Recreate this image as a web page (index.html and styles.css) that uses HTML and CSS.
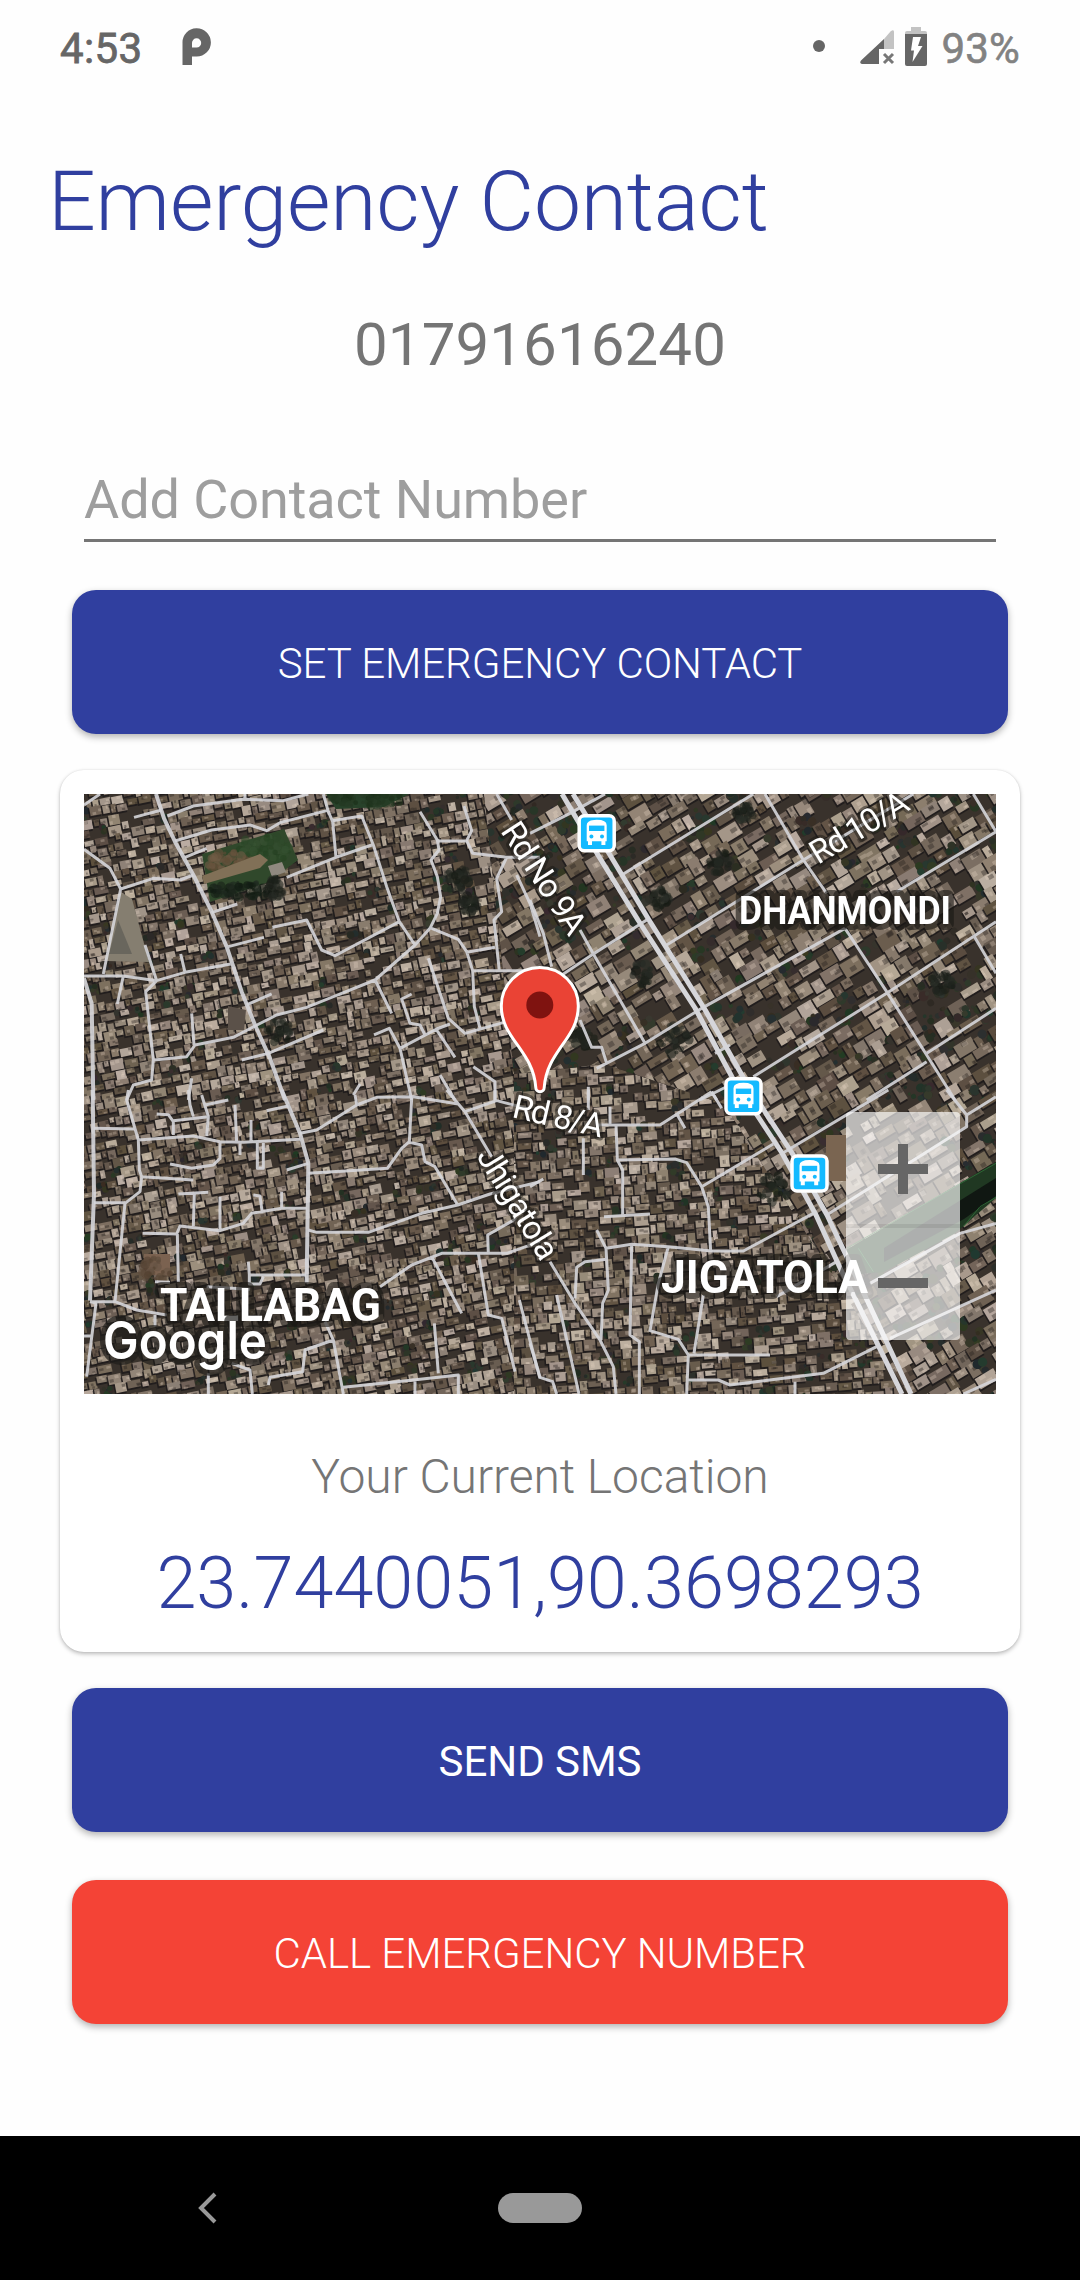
FILE: index.html
```html
<!DOCTYPE html>
<html lang="en">
<head>
<meta charset="utf-8">
<title>Emergency Contact</title>
<link rel="stylesheet" href="styles.css">
</head>
<body>
<div class="screen">
  <header class="status">
    <span class="clock">4:53</span>
    <svg class="p-icon" width="30" height="38" viewBox="0 0 30 38"><path fill="#666" fill-rule="evenodd" d="M.5 37V15A14.2 14.2 0 1 1 14.7 28.600H10V37ZM10 19.500V15A4.600 4.600 0 1 1 14.500 19.500Z"/></svg>
    <span class="dot"></span>
    <svg class="signal" width="36" height="36" viewBox="0 0 36 36"><path fill="#c3c3c3" d="M25 10 31.500 2.500Q35 0 35 3V20H25Z"/><path fill="#666" d="M25 10V20H20V35H3Q0 34 2 31.500Z"/><path stroke="#777" stroke-width="3" d="m25 25 9 9m0-9-9 9"/></svg>
    <svg class="battery" width="22" height="40" viewBox="0 0 22 40"><path fill="#c3c3c3" d="M6 0H16V4H20Q22 4 22 6V8H0V6Q0 4 2 4H6Z"/><path fill="#666" d="M0 7H22V37Q22 39 20 39H2Q0 39 0 37Z"/><path fill="#fff" d="M8 10H16L13 19H17.500L7.500 35 9 23.500H6Z"/></svg>
    <span class="percent">93%</span>
  </header>
  <main class="content">
    <h1 class="title">Emergency Contact</h1>
    <p class="number">01791616240</p>
    <div class="field">Add Contact Number</div>
    <button class="btn">SET EMERGENCY CONTACT</button>
    <section class="card">
      <div class="map">
        <canvas class="satellite" width="912" height="600"></canvas>
        <svg class="overlay" width="912" height="600" viewBox="0 0 912 600">
          <g class="roads">
            <g transform="translate(-24 -24) scale(.33333)">
              <path class="main" d="M288 72 312 145 345 215 400 315 455 425 500 530 545 665 585 765 630 865 675 990M72 625 95 700 100 990"/>
              <path d="M72 105 120 72M222 142 305 120M322 138 400 108 550 88 670 92 745 72M555 72V90M345 213 455 180 570 165 620 182 660 158 800 122M790 72 805 125 818 155 828 262M818 152 905 138 940 225 980 350 1018 455 1065 525M680 322 828 262 935 225M375 262 440 235M72 238 150 295 182 357 130 612M182 357 280 325 360 330 400 315M72 618 190 618 290 632 375 607 512 582M290 632 255 525M375 607 362 552M190 618 172 702M455 428 532 402M505 530 612 502M637 472 740 450 785 540 825 557 1018 455M560 705 635 672M290 632 257 665 280 870 275 930 220 945 200 990M282 870 380 860 405 825 520 802 585 768 650 735 740 712 945 630 1065 525 1110 475 1132 430 1142 380 1132 320 1113 270 1137 240 1132 210 1080 125M402 825 395 730M395 925 385 990M545 870 625 850 790 780M945 630 995 730M1132 213 1220 212 1235 182 1212 108M1220 212 1238 250 1340 262 1440 262M1340 262 1310 325 1325 425 1302 450 1318 603M1115 475 1195 508 1220 545 1238 602 1243 710 1260 775M1220 547 1305 532M1238 602H1420M1105 565 1165 745 1215 790 1340 755M1055 672 1025 687 1050 760 1080 765 1095 795M1020 835 1130 777 1170 762M1130 780 1185 862M942 795 988 775 1020 835 1055 990M1310 72 1355 150M1370 315 1410 400 1440 500M1240 890 1305 935V990M1140 915 1185 990M880 975 900 942"/>
            </g>
            <g transform="translate(446 -24) scale(.33333)">
              <path d="M0 190 120 130 225 72M275 315 670 72M705 72 820 270 890 370M410 525 820 270 1150 72M945 475 1070 665 1190 855 1275 990M1330 72 1398 185M1100 365 1398 185M1330 495 1398 610M1010 990 1190 875M1190 850 1398 715M0 390 40 490 65 590M100 612 190 552 350 450M150 480 190 552 345 820 200 895M345 820 520 712 945 475M670 920 1070 670 1398 455M150 750 185 832H215L230 880M510 990 600 945M545 965 560 990M175 950V990M555 850 600 825"/>
            </g>
            <g transform="translate(-24 296) scale(.33333)">
              <path class="main" d="M665 0 720 130 745 220 740 580M98 0 102 310 90 632"/>
              <path d="M205 0 200 30 235 150 400 138 480 155 550 157 720 148M385 0 390 45 400 80M290 72 325 74 340 95V135M340 92 445 80 425 15M445 80 440 138M435 45 505 30M525 45 530 157M573 90V155M620 62 685 48M720 130 770 120 890 45 950 22 1060 20 1195 42 1160 0M1055 25 1048 155 1025 175 982 235 745 250M1048 157 1085 165 1095 215 1125 230 1193 345 1290 312 1440 275M1193 345 1085 370 925 427H770L745 420M235 150 238 240 245 260 240 305 195 340 165 635M245 260 400 270M330 222 395 235 460 225 480 205V155M102 115 225 117M102 338H195M540 157V195M592 157V235H610V157M680 240 745 220M355 312 445 307M403 312 400 408M248 430 350 432 360 408 480 422 550 400 575 370 665 355 740 355M580 315 600 318 607 370M665 305V355M480 320V422M352 432 355 575M565 515 568 555H738M568 555V582H600L610 560M285 575 330 577M440 590 570 598M90 635 165 635 230 660 320 675M90 635 108 640 80 860M72 738H92M285 675V710M795 695 820 750 850 912M820 750 735 780 728 845 630 862 625 885M850 892 1060 870 1195 855V912M445 850V912M515 820 570 840 577 912M1065 870V912M1123 700 1135 850M960 590 1055 525 1145 490H1340L1440 455M1115 500 1205 670M1255 490 1285 675 1325 685 1365 845M1285 490 1283 435 1370 385M1378 630 1440 865M1195 42 1215 65 1310 32 1400 55M1215 65 1295 200M1305 0V30M885 15 890 42"/>
            </g>
            <g transform="translate(446 296) scale(.33333)">
              <path d="M175 0V60M200 105H390L545 5M240 50V105M160 145V255M0 290 40 267M258 105 262 210 278 240V378M262 210 435 207 470 218 515 290 535 350 542 485M515 290 730 162M222 380 360 372M200 420 228 475 305 463 415 470 545 483H640L850 370M228 475 235 600 218 640 213 750M230 508 165 515 140 532 135 625M60 515 135 640 210 750 250 830 258 912M305 463 300 735 328 755V912M415 470 385 580 360 722 445 748 475 795 470 912M520 615 492 790M475 795H720M470 870 565 870 600 885 880 850 1040 770M795 875V912M80 615 147 912M0 760 30 862 68 875 80 912M442 75 465 115M545 5 575 55M760 188 1075 0M890 375 1310 110V75L1250 0M1310 75 1398 20M740 620 920 515M1020 580 1290 430 1398 400M1080 745 1398 600M1300 912 1398 868"/>
              <path class="shore" d="M950 475 1398 220M985 475 1030 545M1300 410 1350 350 1398 322"/>
            </g>
            <path class="avenue" d="M478 0 514 61 554 126 611 214 648 283 673 321 698 359 732 421 757 476 768 498 818 600M489 0 526 61 565 126 620 214 659 283 683 321 708 359 743 421 769 476 827 600"/>
          </g>
          <defs>
            <g id="bus">
              <rect x="-17.500" y="-17.500" width="35" height="35" rx="5" fill="#14baff" stroke="#fff" stroke-width="3.500"/>
              <path fill="#fff" d="M-10-8Q-10-13.500 0-13.500T10-8V8H8.700V11.700H4.700V8H-4.700V11.700H-8.700V8H-10Z"/>
              <path fill="#14baff" d="M-7.700-7.700H7.700V-2.300H-7.700Z"/>
              <circle cx="-5.300" cy="3.300" r="2" fill="#14baff"/><circle cx="5.300" cy="3.300" r="2" fill="#14baff"/>
            </g>
          </defs>
          <use href="#bus" x="512.700" y="39.300"/>
          <use href="#bus" x="659.500" y="302.300"/>
          <use href="#bus" x="725.500" y="379.500"/>
          <g class="street">
            <text transform="translate(416 37) rotate(57)" textLength="127">Rd No 9A</text>
            <text transform="translate(734 71) rotate(-31)" textLength="109">Rd 10/A</text>
            <text transform="translate(427 323) rotate(13)" textLength="92">Rd 8/A</text>
            <text transform="translate(392 362) rotate(58.600)" textLength="125">Jhigatola</text>
          </g>
          <g class="area">
            <text x="655" y="130" font-size="38.500" textLength="212" lengthAdjust="spacingAndGlyphs">DHANMONDI</text>
            <text x="76" y="526.700" font-size="46.500" textLength="221" lengthAdjust="spacingAndGlyphs">TALLABAG</text>
            <text x="577" y="498.700" font-size="46.500" textLength="207" lengthAdjust="spacingAndGlyphs">JIGATOLA</text>
          </g>
          <text class="google" x="19" y="565" textLength="164" lengthAdjust="spacingAndGlyphs">Google</text>
          <path fill="#ea4335" stroke="#fff" stroke-width="3" d="M494.300 212C494.300 245 463 256 460.200 293.500A4.200 4.200 0 0 1 451.800 293.500C449 256 417.300 245 417.300 212A38.500 38.500 0 0 1 494.300 212Z"/>
          <circle cx="455.800" cy="211" r="13.500" fill="#7f1310"/>
        </svg>
        <div class="zoom"><span class="plus"></span><span class="minus"></span></div>
      </div>
      <p class="caption">Your Current Location</p>
      <p class="coords">23.7440051,90.3698293</p>
    </section>
    <button class="btn regular">SEND SMS</button>
    <button class="btn call">CALL EMERGENCY NUMBER</button>
  </main>
  <nav class="navbar">
    <svg class="back" width="20" height="32" viewBox="0 0 20 32"><path fill="none" stroke="#999" stroke-width="4" d="M17 2 3 16 17 30"/></svg>
    <span class="home"></span>
  </nav>
</div>
<script src="map.js"></script>
</body>
</html>
```
FILE: styles.css
```css
* { box-sizing: border-box; }
body { margin: 0; background: #fff; font-family: Roboto, "Liberation Sans", sans-serif; }
h1, p { margin: 0; font-weight: 300; }
.screen { width: 1080px; height: 2280px; display: flex; flex-direction: column; overflow: hidden; background: #fefefe; }
.status { height: 96px; flex: none; display: flex; align-items: flex-start; padding: 24px 60px 0; color: #666; font-size: 42px; line-height: 49px; }
.clock { width: 122px; letter-spacing: .4px; -webkit-text-stroke: .8px #666; }
.p-icon { margin-top: 4px; }
.dot { width: 12px; height: 12px; border-radius: 50%; background: #666; margin: 16px 34px 0 auto; }
.signal { margin: 5px 10px 0 0; }
.battery { margin: 3px 14px 0 0; }
.percent { color: #828282; letter-spacing: .2px; -webkit-text-stroke: .6px #828282; }
.content { flex: 1; display: flex; flex-direction: column; align-items: center; }
.title { align-self: stretch; margin-top: 56px; padding-left: 48px; font-size: 84px; line-height: 100px; letter-spacing: -.17px; color: #303f9f; }
.number { margin-top: 58px; font-size: 60px; line-height: 70px; letter-spacing: .1px; font-weight: 400; color: #757575; }
.field { width: 912px; height: 74px; margin: 88px 0 48px; border-bottom: 3px solid #757575; font-size: 54px; line-height: 64px; letter-spacing: -.08px; color: #9e9e9e; }
.btn { display: block; flex: none; width: 936px; height: 144px; padding: 3px 0 0; border: 0; border-radius: 24px; background: #303f9f; color: #fff; font: 300 42px/49px Roboto, "Liberation Sans", sans-serif; letter-spacing: -.06px; box-shadow: 0 3px 7px rgba(0,0,0,.3); }
.btn.regular { font-weight: 400; }
.btn.call { margin-top: 48px; background: #f44336; }
.card { width: 960px; height: 882px; flex: none; margin: 36px 0; padding: 24px; border-radius: 24px; background: #fff; box-shadow: 0 2px 4px rgba(0,0,0,.26), 0 0 2px rgba(0,0,0,.1); display: flex; flex-direction: column; align-items: center; }
.map { position: relative; width: 912px; height: 600px; flex: none; overflow: hidden; background: #625b51; }
.satellite { display: block; filter: blur(.5px); }
.overlay { position: absolute; left: 0; top: 0; }
.roads path { fill: none; stroke: #d6d6da; stroke-opacity: .9; stroke-width: 9px; stroke-linejoin: round; }
.roads path.main { stroke-width: 12px; }
.roads path.avenue { stroke-width: 5px; stroke-opacity: 1; }
.roads path.shore { stroke: #2f6b38; stroke-width: 3px; }
.street text { font-size: 33px; fill: #fff; stroke: rgba(25,23,20,.5); stroke-width: 6px; stroke-linejoin: round; paint-order: stroke; }
.area text { font-weight: 700; fill: #fff; stroke: rgba(25,23,20,.6); stroke-width: 12px; stroke-linejoin: round; paint-order: stroke; }
.google { font-family: Inter, "Liberation Sans", sans-serif; font-weight: 600; font-size: 52px; fill: #fff; stroke: rgba(30,28,25,.7); stroke-width: 12px; stroke-linejoin: round; paint-order: stroke; }
.zoom { position: absolute; left: 762px; top: 318px; width: 114px; height: 228px; border-radius: 4px; background: linear-gradient(transparent 112px, rgba(0,0,0,.08) 112px 116px, transparent 116px), rgba(255,255,255,.66); display: grid; grid-template-rows: 1fr 1fr; place-items: center; }
.plus { width: 50px; height: 50px; background: linear-gradient(#666,#666) center / 10px 50px no-repeat, linear-gradient(#666,#666) center / 50px 10px no-repeat; }
.minus { width: 50px; height: 10px; background: #666; }
.caption { margin-top: 54px; font-size: 48px; line-height: 58px; letter-spacing: -.05px; color: #757575; }
.coords { margin-top: 35px; font-size: 72px; line-height: 86px; color: #303f9f; }
.navbar { height: 144px; flex: none; background: #000; display: flex; align-items: center; }
.back { margin-left: 198px; }
.home { width: 84px; height: 30px; margin-left: 280px; border-radius: 15px; background: #999; }
```
FILE: map.js
```js
const ctx = document.querySelector('.satellite').getContext('2d');

let seed = 20417;
function rnd() {
  seed = (seed * 1664525 + 1013904223) >>> 0;
  return seed / 4294967296;
}

// Fills the current clip with rows of rooftops, each with a cast shadow.
function rooftops(angle, cell, green, light) {
  ctx.save();
  ctx.translate(456, 300);
  ctx.rotate(angle);
  for (let y = -620; y < 620; y += cell * 0.92) {
    for (let x = -620 - rnd() * cell; x < 620;) {
      const w = cell * (0.45 + rnd() * 0.95);
      const h = cell * (0.5 + rnd() * 0.6);
      const r = rnd();
      const oy = (rnd() - 0.5) * cell * 0.5;
      if (r < green) {
        for (let i = 0; i < 5; i++) {
          ctx.fillStyle = `rgb(${32 + rnd() * 26},${40 + rnd() * 20},${32 + rnd() * 16})`;
          ctx.beginPath();
          ctx.arc(x + rnd() * w, y + rnd() * h, 1.5 + rnd() * cell * 0.22, 0, 7);
          ctx.fill();
        }
      } else if (r > green + 0.06) {
        const l = light + Math.pow(rnd(), 1.3) * 98;
        ctx.fillStyle = 'rgba(26,23,24,.75)';
        ctx.fillRect(x - 1.6, y + oy + 1.2, w, h);
        ctx.fillStyle = `rgb(${l + 12},${l - 3 + rnd() * 3},${l - 20 + rnd() * 9})`;
        ctx.fillRect(x, y + oy, w - 0.6, h - 0.6);
        for (let i = 0; i < 2; i++) {
          ctx.fillStyle = rnd() < 0.5 ? 'rgba(238,220,200,.28)' : 'rgba(38,32,29,.38)';
          ctx.fillRect(x + rnd() * w * 0.7, y + oy + rnd() * h * 0.7, w * 0.3, h * 0.3);
        }
      }
      x += w + rnd();
    }
  }
  ctx.restore();
}

function clipTo(points, draw) {
  ctx.save();
  ctx.beginPath();
  points.forEach(([x, y]) => ctx.lineTo(x, y));
  ctx.closePath();
  ctx.clip();
  draw();
  ctx.restore();
}

function patch(color, points) {
  ctx.fillStyle = color;
  ctx.beginPath();
  points.forEach(([x, y]) => ctx.lineTo(x, y));
  ctx.fill();
}

// Scattered dabs that give vegetation and bare soil a rough surface.
function dabs(x, y, rx, ry, n, color) {
  for (let i = 0; i < n; i++) {
    const a = rnd() * 6.28;
    const d = Math.sqrt(rnd());
    const v = (rnd() - 0.5) * 22;
    ctx.fillStyle = `rgba(${color[0] + v},${color[1] + v},${color[2] + v},.6)`;
    ctx.beginPath();
    ctx.arc(x + Math.cos(a) * d * rx, y + Math.sin(a) * d * ry, 1.5 + rnd() * 3.5, 0, 7);
    ctx.fill();
  }
}

ctx.fillStyle = '#39322c';
ctx.fillRect(0, 0, 912, 600);
clipTo([[0, 0], [400, 0], [430, 280], [430, 600], [0, 600]], () => rooftops(-0.2, 10.5, 0.04, 80));
clipTo([[430, 280], [520, 270], [640, 310], [770, 500], [820, 600], [430, 600]], () => rooftops(-0.08, 11, 0.06, 80));
clipTo([[400, 0], [912, 0], [912, 600], [824, 600], [640, 310], [520, 270], [430, 280]], () => rooftops(-0.54, 16, 0.16, 78));

// Park, playgrounds, the triangular lot and the lake
patch('#30482b', [[118, 60], [200, 35], [214, 66], [185, 88], [126, 108]]);
dabs(180, 55, 26, 14, 70, [46, 74, 42]);
dabs(145, 68, 22, 10, 50, [104, 84, 62]);
patch('#817057', [[118, 82], [176, 60], [184, 66], [176, 74], [120, 90]]);
dabs(158, 96, 34, 8, 70, [24, 34, 25]);
patch('#8f897f', [[184, 72], [198, 68], [202, 78], [188, 83]]);
patch('#28422a', [[242, 0], [325, 0], [300, 13], [252, 15]]);
dabs(282, 5, 38, 8, 60, [34, 54, 32]);
patch('#857e70', [[37, 98], [48, 105], [65, 168], [22, 167]]);
patch('#69665d', [[34, 126], [48, 160], [25, 160]]);
patch('#7b6250', [[60, 460], [86, 460], [86, 482], [60, 480]]);
dabs(72, 476, 15, 12, 40, [92, 74, 58]);
patch('#5b5149', [[144, 212], [162, 216], [160, 236], [144, 236]]);
patch('#7a6551', [[742, 341], [762, 341], [762, 387], [742, 387]]);
patch('#203822', [[762, 456], [912, 368], [912, 404], [870, 440], [800, 478], [776, 480]]);
patch('#101712', [[800, 454], [912, 384], [912, 402], [880, 425], [800, 468]]);

// Trees and deep shadows
[[375, 86, 12], [190, 95, 10], [195, 238, 12], [590, 245, 15], [690, 395, 16], [660, 20, 10],
 [635, 68, 12], [500, 245, 12], [575, 105, 10], [385, 110, 9], [560, 180, 12], [858, 190, 12]]
  .forEach(([x, y, r]) => dabs(x, y, r, r, 34, [32, 36, 30]));
```
